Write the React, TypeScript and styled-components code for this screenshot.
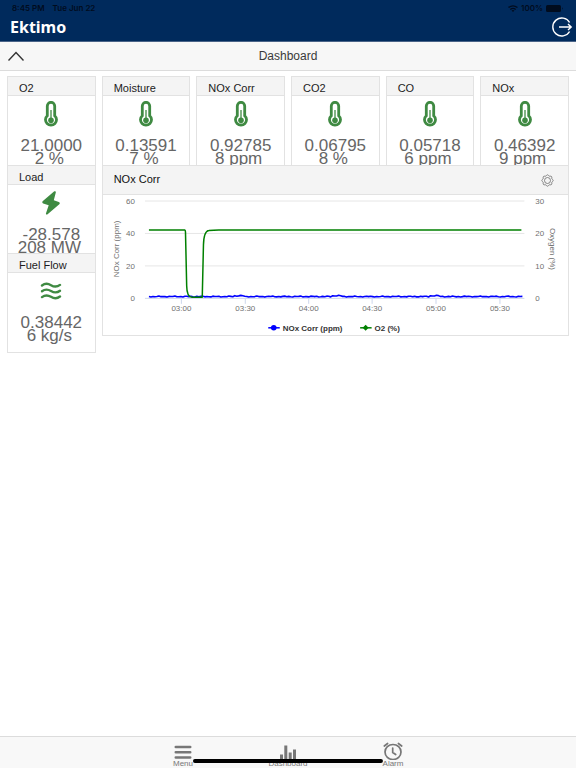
import React from "react";
import styled, { createGlobalStyle } from "styled-components";

const GlobalStyle = createGlobalStyle`
  *, *::before, *::after { box-sizing: border-box; }
  body {
    margin: 0;
    background: #ffffff;
    color: #222222;
    font-family: "Liberation Sans", Arial, sans-serif;
  }
  button {
    margin: 0;
    padding: 0;
    border: 0;
    background: none;
    color: inherit;
    font: inherit;
    cursor: pointer;
  }
  svg { display: block; }
`;

const Screen = styled.div`
  display: flex;
  flex-direction: column;
  min-height: 100vh;
`;

const Header = styled.header`
  background: #002a5c;
  border-bottom: 1px solid #4a6488;
`;

const StatusBar = styled.div`
  display: flex;
  justify-content: space-between;
  align-items: center;
  height: 16px;
  padding: 0 12px;
  color: #000c1e;
  font-family: Inter, sans-serif;
  font-size: 8px;
  font-weight: 600;
`;

const StatusGroup = styled.div<{ $gap: number }>`
  display: flex;
  align-items: center;
  gap: ${(p) => p.$gap}px;
`;

const BrandRow = styled.div`
  display: flex;
  justify-content: space-between;
  align-items: center;
  height: 25px;
  padding: 0 3px 3px 10px;
  color: #ffffff;
`;

const Brand = styled.h1`
  margin: 0;
  font-family: "Noto Sans", "Open Sans", sans-serif;
  font-size: 16px;
  line-height: 22px;
  font-weight: 700;
`;

const IconButton = styled.button`
  display: flex;
  align-items: center;
  justify-content: center;
`;

const TitleBar = styled.div`
  display: grid;
  grid-template-columns: 1fr auto 1fr;
  align-items: center;
  justify-items: start;
  height: 29px;
  padding: 0 8px;
  background: #f7f7f7;
  border-bottom: 1px solid #dcdcdc;
`;

const PageTitle = styled.h2`
  margin: 0;
  color: #3a3a3a;
  font-size: 12px;
  line-height: 16px;
  font-weight: 400;
`;

const Board = styled.main`
  flex: 1;
  display: grid;
  grid-template-columns: repeat(6, minmax(0, 1fr));
  grid-template-rows: 89px 88px 100px;
  column-gap: 6px;
  align-items: start;
  padding: 5px 7px;
`;

const Tile = styled.section<{ $col: number; $row: number }>`
  grid-column: ${(p) => p.$col};
  grid-row: ${(p) => p.$row};
  height: 100px;
  background: #ffffff;
  border: 1px solid #e2e2e2;
`;

const TileTitle = styled.h3`
  margin: 0;
  height: 19px;
  padding: 4px 11px 0;
  background: #f4f4f4;
  border-bottom: 1px solid #e2e2e2;
  color: #1c1c1c;
  font-size: 11px;
  line-height: 14px;
  font-weight: 400;
  white-space: nowrap;
`;

const TileIcon = styled.div`
  display: flex;
  align-items: center;
  justify-content: center;
  height: 36px;
  margin-bottom: 7px;
  color: #3f8a42;
`;

const Reading = styled.div`
  color: #666666;
  font-size: 17px;
  line-height: 13px;
  text-align: center;
  white-space: nowrap;
`;

const Unit = styled(Reading)`
  padding-right: 4px;
`;

const Panel = styled.section`
  grid-column: 2 / 7;
  grid-row: 2 / 4;
  background: #ffffff;
  border: 1px solid #e2e2e2;
`;

const PanelHead = styled.div`
  display: flex;
  justify-content: space-between;
  align-items: center;
  height: 29px;
  padding: 0 14px 0 11px;
  background: #f4f4f4;
  border-bottom: 1px solid #e2e2e2;
  color: #777777;
`;

const PanelTitle = styled.h3`
  margin: 0;
  padding-bottom: 2px;
  color: #111111;
  font-size: 11px;
  line-height: 14px;
  font-weight: 400;
`;

const Chart = styled.svg`
  width: 100%;
  height: auto;
  font-size: 8px;
  fill: #707070;
`;

const TabBar = styled.nav`
  position: sticky;
  bottom: 0;
  display: flex;
  justify-content: center;
  height: 32px;
  background: #f8f8f8;
  border-top: 1px solid #dcdcdc;
  color: #777777;
`;

const Tab = styled.button`
  display: flex;
  flex-direction: column;
  align-items: center;
  width: 105px;
  padding-top: 5px;
`;

const TabLabel = styled.span`
  font-size: 8px;
  line-height: 8px;
`;

const HomeIndicator = styled.div`
  position: absolute;
  bottom: 5px;
  left: 50%;
  width: 33%;
  height: 4px;
  border-radius: 2px;
  background: #000000;
  transform: translateX(-50%);
`;

type IconKind = "thermo" | "bolt" | "flow";

function TileGlyph({ kind }: { kind: IconKind }) {
  if (kind === "bolt") {
    return (
      <svg width="18" height="24" viewBox="0 0 18 24" fill="currentColor" aria-hidden="true">
        <path d="M12 .6.9 10C0 10.800.1 12.100 1.200 12.500L6.700 14.300 4 22.200C3.600 23.500 4.800 24 5.600 23.200L17.300 13.300C18.100 12.500 17.900 11.300 16.800 10.900L11.800 9.200 13.800 1.600C14.100.3 12.900-.2 12 .6Z" />
      </svg>
    );
  }
  if (kind === "flow") {
    return (
      <svg width="22" height="18" viewBox="0 0 22 18" fill="none" stroke="currentColor" strokeWidth="2.400" strokeLinecap="round" aria-hidden="true">
        {[3.2, 9, 14.8].map((y) => (
          <path key={y} d={`M2 ${y + 0.3}C5.500 ${y - 2.4} 8 ${y - 1.8} 11 ${y}S16.500 ${y + 2.4} 20 ${y - 0.3}`} />
        ))}
      </svg>
    );
  }
  return (
    <svg width="14" height="26" viewBox="0 0 14 26" fill="none" stroke="currentColor" aria-hidden="true">
      <path strokeWidth="2.800" d="M3.300 14.800V5a3.700 3.700 0 0 1 7.400 0v9.800a5.500 5.300 0 1 1-7.400 0Z" />
      <path strokeWidth="1.300" d="M7 9v9" />
      <circle cx="7" cy="19.300" r="2.800" fill="currentColor" stroke="none" />
    </svg>
  );
}

interface TileData {
  title: string;
  value: string;
  unit: string;
  col: number;
  row: number;
  icon: IconKind;
}

const tiles: TileData[] = [
  { title: "O2", value: "21.0000", unit: "2 %", col: 1, row: 1, icon: "thermo" },
  { title: "Moisture", value: "0.13591", unit: "7 %", col: 2, row: 1, icon: "thermo" },
  { title: "NOx Corr", value: "0.92785", unit: "8 ppm", col: 3, row: 1, icon: "thermo" },
  { title: "CO2", value: "0.06795", unit: "8 %", col: 4, row: 1, icon: "thermo" },
  { title: "CO", value: "0.05718", unit: "6 ppm", col: 5, row: 1, icon: "thermo" },
  { title: "NOx", value: "0.46392", unit: "9 ppm", col: 6, row: 1, icon: "thermo" },
  { title: "Load", value: "-28.578", unit: "208 MW", col: 1, row: 2, icon: "bolt" },
  { title: "Fuel Flow", value: "0.38442", unit: "6 kg/s", col: 1, row: 3, icon: "flow" },
];

const gridRows = [
  { y: 6, left: "60", right: "30" },
  { y: 38.5, left: "40", right: "20" },
  { y: 71, left: "20", right: "10" },
  { y: 103.5, left: "0", right: "0" },
];

const timeTicks = [
  { x: 78.5, label: "03:00" },
  { x: 142.5, label: "03:30" },
  { x: 206, label: "04:00" },
  { x: 269.5, label: "04:30" },
  { x: 333.5, label: "05:00" },
  { x: 397.5, label: "05:30" },
];

const noxPoints = Array.from({ length: 188 }, (_, i) => {
  const x = 46 + i * 2;
  const ripple = Math.sin(i * 2.3) * 0.3 + Math.sin(i * 0.9) * 0.25;
  const bump = [136, 234, 332].some((c) => Math.abs(x - c) < 6) ? -0.8 : 0;
  return `${x},${(101.7 + ripple + bump).toFixed(2)}`;
}).join(" ");

function TrendChart() {
  return (
    <Chart viewBox="0 0 466 140" role="img" aria-label="NOx Corr and O2 trend">
      {gridRows.map((r, i) => (
        <g key={r.left}>
          <path d={`M42 ${r.y}H422`} stroke={i === 3 ? "#ccd6eb" : "#e6e6e6"} />
          <text x="32" y={r.y + 3} textAnchor="end">{r.left}</text>
          <text x="433" y={r.y + 3}>{r.right}</text>
        </g>
      ))}
      {timeTicks.map((t) => (
        <g key={t.label}>
          <path d={`M${t.x} 104V109`} stroke="#ccd6eb" />
          <text x={t.x} y="116" textAnchor="middle">{t.label}</text>
        </g>
      ))}
      <text transform="translate(16 54) rotate(-90)" textAnchor="middle">NOx Corr (ppm)</text>
      <text transform="translate(448 54) rotate(90)" textAnchor="middle">Oxygen (%)</text>
      <polyline points={noxPoints} fill="none" stroke="#0000ff" strokeWidth="1.600" strokeLinejoin="round" />
      <path
        d="M46 35H82Q82.500 35 82.600 37L83.800 91Q84 102.300 89 102.300H99.400L100.600 50Q101 36 106 35.500Q110 35 116 35H419"
        fill="none"
        stroke="#008000"
        strokeWidth="1.500"
        strokeLinejoin="round"
      />
      <g fontWeight="700" fill="#333333">
        <path d="M165.500 133H177" stroke="#0000ff" strokeWidth="1.500" />
        <circle cx="171" cy="133" r="2.800" fill="#0000ff" />
        <text x="180" y="136">NOx Corr (ppm)</text>
        <path d="M257.500 133H269" stroke="#008000" strokeWidth="1.500" />
        <path d="M263 130l3 3-3 3-3-3Z" fill="#008000" />
        <text x="272" y="136">O2 (%)</text>
      </g>
    </Chart>
  );
}

const gearOutline = Array.from({ length: 49 }, (_, i) => {
  const a = (i / 48) * Math.PI * 2;
  const r = 5.2 + 0.5 * Math.cos(a * 8);
  return `${(6.5 + r * Math.cos(a)).toFixed(2)},${(6.5 + r * Math.sin(a)).toFixed(2)}`;
}).join(" ");

export default function App() {
  return (
    <Screen>
      <GlobalStyle />
      <Header>
        <StatusBar>
          <StatusGroup $gap={8}>
            <span>8:45 PM</span>
            <span>Tue Jun 22</span>
          </StatusGroup>
          <StatusGroup $gap={3}>
            <svg width="10" height="7" viewBox="0 0 10 7" fill="none" stroke="currentColor" strokeWidth="1.300" aria-hidden="true">
              <path d="M.5 2.600Q5-1 9.500 2.600M2.300 4.400Q5 2.200 7.700 4.400" />
              <path d="M5 7 3.500 5.500Q5 4.400 6.500 5.500Z" fill="currentColor" stroke="none" />
            </svg>
            <span>100%</span>
            <svg width="18" height="7" viewBox="0 0 18 7" fill="currentColor" aria-hidden="true">
              <rect width="15" height="7" rx="1.500" />
              <path d="M16 2.300q1.500 1.200 0 2.400Z" />
            </svg>
          </StatusGroup>
        </StatusBar>
        <BrandRow>
          <Brand>Ektimo</Brand>
          <IconButton type="button" aria-label="Log out">
            <svg width="22" height="20" viewBox="0 0 22 20" fill="none" stroke="currentColor" strokeWidth="1.400" aria-hidden="true">
              <path d="M18.600 5.500A9 9 0 1 0 18.600 14.500" />
              <path d="M8 10H20M17 7l3.200 3-3.200 3" />
            </svg>
          </IconButton>
        </BrandRow>
      </Header>
      <TitleBar>
        <IconButton type="button" aria-label="Collapse">
          <svg width="16" height="10" viewBox="0 0 16 10" fill="none" stroke="#333333" strokeWidth="1.400" aria-hidden="true">
            <path d="M.5 9.500 8 1.500 15.500 9.500" />
          </svg>
        </IconButton>
        <PageTitle>Dashboard</PageTitle>
      </TitleBar>
      <Board>
        {tiles.map((t) => (
          <Tile key={t.title} $col={t.col} $row={t.row}>
            <TileTitle>{t.title}</TileTitle>
            <TileIcon>
              <TileGlyph kind={t.icon} />
            </TileIcon>
            <Reading>{t.value}</Reading>
            <Unit>{t.unit}</Unit>
          </Tile>
        ))}
        <Panel>
          <PanelHead>
            <PanelTitle>NOx Corr</PanelTitle>
            <IconButton type="button" aria-label="Chart settings">
              <svg width="13" height="13" viewBox="0 0 13 13" fill="none" stroke="currentColor" strokeWidth="0.900" aria-hidden="true">
                <polygon points={gearOutline} />
                <circle cx="6.500" cy="6.500" r="3" />
              </svg>
            </IconButton>
          </PanelHead>
          <TrendChart />
        </Panel>
      </Board>
      <TabBar>
        <Tab type="button">
          <svg width="18" height="18" viewBox="0 0 18 18" stroke="currentColor" strokeWidth="2.600" strokeLinecap="round" aria-hidden="true">
            <path d="M1.800 5H16.200M1.800 10.200H16.200M1.800 15.500H16.200" />
          </svg>
          <TabLabel>Menu</TabLabel>
        </Tab>
        <Tab type="button">
          <svg width="18" height="18" viewBox="0 0 18 18" fill="currentColor" aria-hidden="true">
            <path d="M1 12.500h3V18H1zM5.300 3.500h3V18h-3zM9.700 10.500h3V18h-3zM14 7.500h3V18h-3z" />
          </svg>
          <TabLabel>Dashboard</TabLabel>
        </Tab>
        <Tab type="button">
          <svg width="20" height="18" viewBox="0 0 20 18" fill="none" stroke="currentColor" strokeWidth="1.700" strokeLinecap="round" aria-hidden="true">
            <ellipse cx="10" cy="10" rx="8" ry="7.500" />
            <path d="M9.700 6V10.500l3 2M1.300 4 4.600 1.500M18.700 4 15.400 1.500" />
          </svg>
          <TabLabel>Alarm</TabLabel>
        </Tab>
        <HomeIndicator />
      </TabBar>
    </Screen>
  );
}
